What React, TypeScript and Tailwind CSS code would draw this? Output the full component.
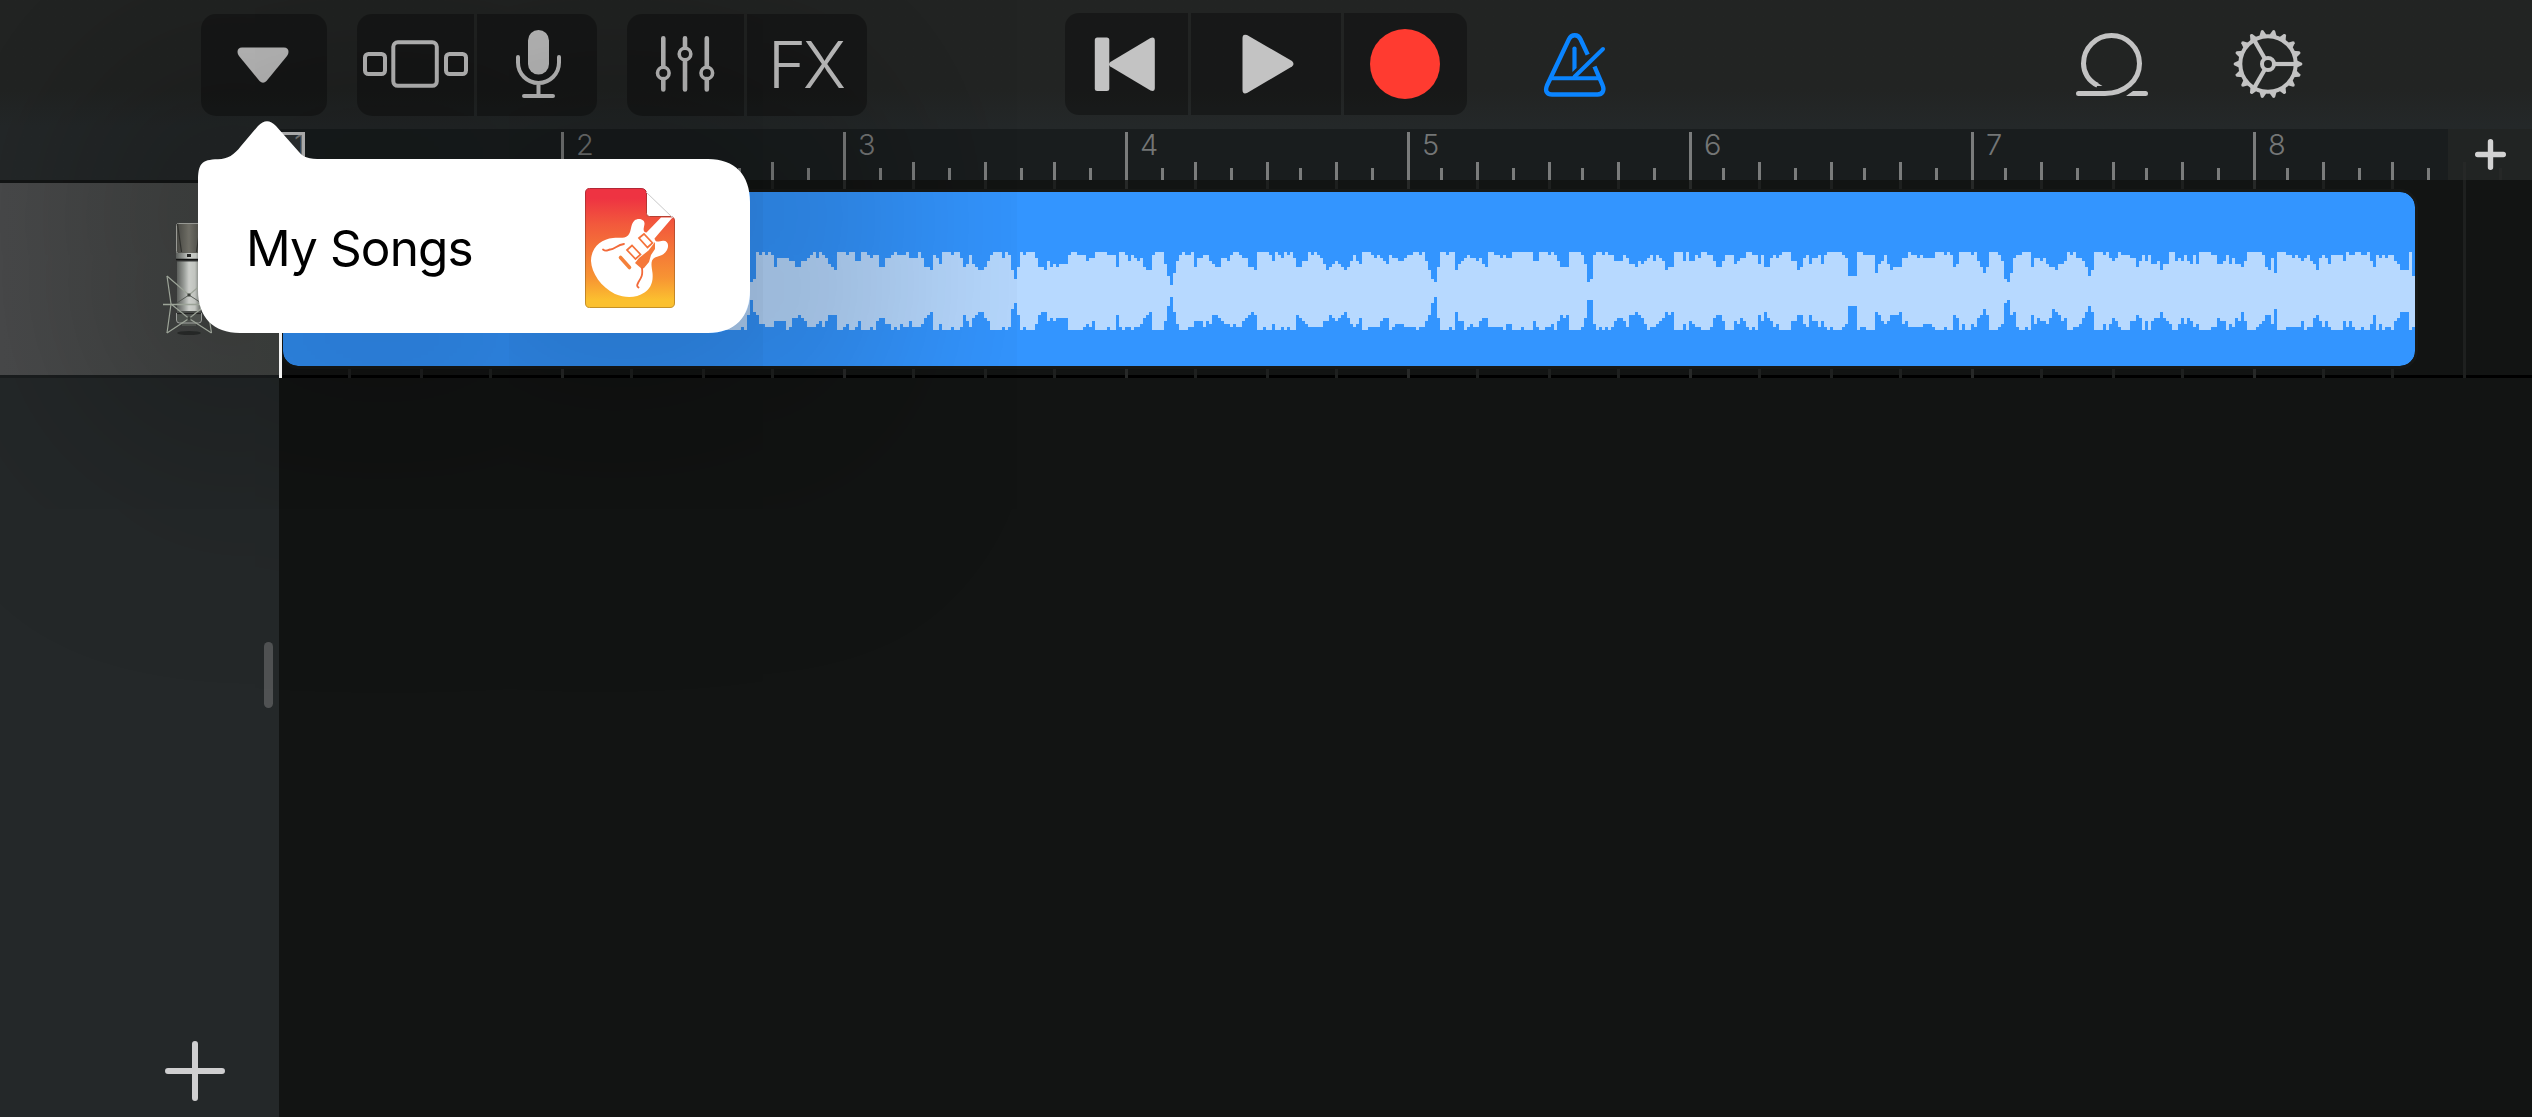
import React from "react";

/* ---------- timeline geometry ---------- */

const ticks = Array.from({ length: 64 }, (_, k) => ({
  k,
  x: Math.floor(k * 11.7415 + 0.485) * 3,
}));

/* Waveform envelope: offset / inset pairs, grouped by timeline segment. */
type Segment = { start: number; end: number; scale: number; top: string; bottom: string };

const segments: Segment[] = [
  {
    start: 740,
    end: 1340,
    scale: 2.6133,
    top: "0:3 26:10 34:9 42:0 49:1 57:0 65:1 73:0 81:1 89:5 97:2 128:3 144:5 159:3 175:2 183:1 191:0 199:2 206:0 214:1 222:2 230:4 238:5 246:6 253:0 277:1 285:0 301:3 316:0 332:1 340:2 348:1 363:5 379:2 395:1 403:0 410:1 434:0 442:2 465:0 473:2 481:5 497:6 504:1 512:2 520:4 528:0 552:1 560:0 575:2 583:5 591:4 599:1 607:4 614:5 622:6 638:5 646:3 654:1 662:0 685:2 693:0 701:1 709:6 717:9 724:5 732:0 740:1 748:0 771:2 779:5 795:6 803:3 811:5 819:4 827:5 835:4 858:1 866:0 882:1 905:3 913:2 929:0 960:1 984:5 991:0 1007:1 1015:3 1023:1 1031:2 1039:3 1046:2 1054:5 1062:6 1078:1 1086:0 1109:4 1117:8 1125:11 1133:7 1140:3 1148:1 1156:0 1164:1 1180:0 1188:5 1196:2 1211:1 1227:3 1235:4 1243:5 1258:2 1274:3 1282:1 1290:0 1305:1 1313:2 1329:5 1345:6 1352:0 1384:1 1392:3 1400:0 1408:1 1416:2 1423:0 1431:1 1439:0 1447:2 1455:5 1470:3 1486:0 1494:1 1502:0 1510:1 1518:2 1526:4 1533:6 1541:5 1549:4 1557:3 1565:4",
    bottom:
      "0:0 3:1 10:0 18:5 26:10 34:6 42:5 50:2 65:1 89:3 120:0 128:1 136:4 152:5 159:4 167:3 175:1 199:2 207:3 214:1 222:3 230:5 253:0 269:1 277:2 285:0 301:1 309:3 316:0 340:1 348:0 356:3 363:4 379:2 395:0 403:1 410:0 418:2 426:1 442:3 450:1 473:2 481:4 489:5 497:6 504:0 520:2 528:0 552:1 560:0 575:1 583:5 591:3 599:1 607:4 614:5 622:6 638:4 646:3 654:0 685:1 693:0 701:1 709:7 717:9 724:5 732:0 740:1 748:0 771:2 779:5 787:6 803:3 811:4 819:3 827:4 858:0 897:1 905:2 913:1 921:3 929:0 960:1 968:0 984:5 991:1 999:0 1007:1 1023:0 1031:1 1046:2 1054:4 1062:5 1070:6 1078:0 1109:3 1117:8 1125:11 1133:6 1141:2 1149:0 1172:1 1188:3 1211:1 1219:3 1227:2 1235:5 1250:4 1258:3 1266:2 1282:1 1290:2 1298:1 1313:3 1321:4 1329:5 1337:6 1345:5 1352:0 1368:1 1376:0 1392:2 1400:0 1416:1 1423:0 1431:1 1439:0 1455:5 1463:4 1470:3 1478:2 1486:1 1526:3 1541:5 1549:4 1557:3 1565:4",
  },
  {
    start: 1340,
    end: 1880,
    scale: 2.8,
    top: "0:4 3:5 11:6 20:5 28:3 37:1 45:3 53:4 62:0 87:1 95:2 104:1 112:2 120:3 129:4 137:1 146:2 162:3 179:2 188:1 204:0 221:1 229:0 238:3 246:6 255:9 263:10 272:5 280:0 297:1 305:0 322:6 330:4 338:3 347:2 356:1 364:2 381:3 389:2 398:4 406:5 414:0 431:1 448:2 457:1 465:2 482:0 541:3 557:0 582:1 591:0 599:1 608:3 616:5 641:0 675:1 683:4 692:10 700:9 708:1 717:0 734:1 742:0 750:1 767:3 792:1 801:2 809:4 826:5 834:3 843:4 851:3 860:2 868:1 876:3 885:1 893:2 902:3 910:6 918:5 935:0 960:3 969:0 977:3 994:1 1002:2 1011:0 1028:1 1044:3 1053:5 1070:3 1078:1 1103:4 1112:3 1120:2 1137:0 1154:1 1170:4 1179:1 1187:5 1204:2 1213:1 1221:2 1229:1 1238:0 1263:3 1280:6 1288:5 1296:2 1305:1 1313:4 1322:2 1339:1 1347:4 1355:1 1364:0 1406:1 1414:2 1422:8 1448:0 1464:1 1498:7 1506:4",
    bottom:
      "0:4 3:5 11:6 20:4 28:2 37:1 45:2 53:4 62:0 78:1 112:3 120:4 137:0 146:1 154:2 179:1 213:0 221:1 238:3 246:5 255:9 263:11 272:4 280:0 305:1 313:0 322:6 330:3 347:0 356:1 364:2 372:1 389:3 398:4 414:1 457:0 465:2 482:0 507:1 515:0 541:3 549:1 557:0 574:1 591:2 599:0 608:3 616:5 624:4 633:5 641:0 675:1 683:4 692:10 708:2 717:0 725:1 734:0 742:1 750:0 759:1 767:3 776:4 792:3 801:1 809:5 826:6 834:5 843:4 851:2 860:0 868:1 885:2 893:3 902:4 910:6 918:5 927:6 935:0 960:2 969:0 977:3 985:2 994:1 1011:0 1036:1 1044:4 1053:5 1070:3 1078:0 1103:3 1112:2 1120:4 1129:3 1137:1 1145:0 1154:1 1162:0 1170:5 1179:3 1187:6 1196:4 1204:3 1213:1 1221:2 1229:0 1263:3 1280:5 1296:2 1305:1 1313:5 1322:3 1339:1 1347:3 1355:1 1364:0 1372:1 1380:0 1406:1 1414:2 1422:8 1448:0 1456:1 1473:0 1498:6 1506:5",
  },
  {
    start: 1880,
    end: 2415,
    scale: 2.8,
    top: "0:4 3:3 11:1 20:4 28:6 37:5 62:2 78:0 87:1 104:2 112:1 120:2 154:0 179:1 188:0 196:1 204:5 213:4 221:0 255:1 263:0 272:3 280:5 288:7 297:5 305:0 330:1 339:3 347:9 356:10 364:7 372:2 381:1 398:0 423:5 431:2 448:3 457:2 465:4 473:5 490:6 498:4 515:3 524:0 532:1 540:0 549:2 566:3 574:5 582:8 591:6 599:0 624:1 633:0 641:2 650:3 658:2 666:0 675:1 700:2 717:5 725:3 734:1 742:3 750:1 759:4 776:3 784:6 792:4 809:0 826:3 834:2 843:3 851:1 860:3 868:4 876:1 885:4 893:0 927:1 944:4 960:3 969:1 977:4 986:2 994:4 1011:5 1019:3 1028:0 1070:1 1078:5 1087:6 1095:2 1103:7 1112:0 1137:1 1154:2 1162:1 1170:2 1179:3 1187:2 1196:1 1204:3 1213:4 1221:6 1229:2 1238:1 1246:2 1254:4 1263:1 1296:3 1305:0 1313:1 1330:0 1347:1 1364:0 1372:3 1380:5 1389:1 1397:2 1406:1 1414:2 1422:1 1439:3 1447:4 1456:6 1481:0 1490:8",
    bottom:
      "0:3 11:2 20:3 28:5 53:6 62:2 70:3 78:1 120:2 146:1 154:0 179:1 188:0 204:5 213:4 221:0 230:2 238:0 255:2 263:1 272:4 280:5 288:7 297:5 305:0 330:1 339:2 347:9 356:10 364:5 372:6 381:1 390:0 406:1 414:0 423:5 431:2 440:4 448:3 465:2 473:4 482:7 490:6 498:5 507:3 515:4 524:0 540:1 557:2 566:4 574:6 582:8 591:6 599:0 624:2 633:0 641:2 650:4 658:3 666:1 675:0 700:3 717:5 725:4 734:0 742:3 750:0 759:3 767:4 784:6 792:4 801:3 809:2 818:0 834:2 843:4 851:2 860:4 868:3 876:1 885:2 893:0 927:1 944:4 952:3 969:0 977:2 986:1 994:4 1003:3 1011:6 1019:3 1028:0 1053:1 1062:2 1070:3 1078:5 1095:2 1103:7 1112:0 1137:1 1179:3 1187:0 1196:1 1213:4 1221:5 1229:3 1238:1 1246:3 1254:1 1263:0 1296:3 1305:1 1313:3 1322:1 1330:0 1347:1 1355:0 1372:2 1380:5 1389:0 1397:2 1406:0 1414:1 1431:0 1439:3 1447:4 1456:6 1481:0 1490:1",
  },
];

const CLIP_X = 283;

function steps(kind: "top" | "bottom") {
  const out: [number, number][] = [[CLIP_X, 4], [720, 0]];
  for (const s of segments) {
    for (const pair of s[kind].split(" ")) {
      const [o, v] = pair.split(":").map(Number);
      out.push([Math.round((s.start + o / s.scale) / 3) * 3, v]);
    }
  }
  return out;
}

function wavePath() {
  const top = steps("top");
  const bottom = steps("bottom");
  const fx = (x: number) => x - CLIP_X;
  let d = `M0 ${top[0][1] * 3}`;
  top.forEach(([x, v]) => {
    d += `H${fx(x)}V${v * 3}`;
  });
  d += `H${2415 - CLIP_X}`;
  for (let i = bottom.length - 1; i >= 0; i--) {
    d += `V${78 - bottom[i][1] * 3}H${fx(bottom[i][0])}`;
  }
  return d + "Z";
}

/* ---------- icons ---------- */

const GRAY = "#c3c3c3";

function Carousel() {
  return (
    <svg width="117" height="102" fill="none" stroke={GRAY} strokeWidth="4">
      <rect x="8" y="40" width="20" height="20" rx="3.5" />
      <rect x="36.3" y="28.3" width="43.5" height="43.5" rx="4.5" />
      <rect x="89" y="40" width="20" height="20" rx="3.5" />
    </svg>
  );
}

function Mic() {
  return (
    <svg width="120" height="102" fill="none" stroke={GRAY} strokeWidth="4" strokeLinecap="round">
      <rect x="51" y="16" width="21" height="44.5" rx="10.5" fill={GRAY} stroke="none" />
      <path d="M41 43v5.500a20.500 20.500 0 0 0 41 0V43M61.500 70v11M47 82h29" />
    </svg>
  );
}

function Faders() {
  return (
    <svg width="117" height="102" fill="none" stroke={GRAY} strokeWidth="4.600" strokeLinecap="round">
      <path d="M36.300 24.300v28M36.300 65v10.500M58 24.300v9M58 46.300v29.200M79.800 24.300v28M79.800 65v10.500" />
      <circle cx="36.300" cy="59" r="5.800" strokeWidth="3.600" />
      <circle cx="58" cy="40" r="5.800" strokeWidth="3.600" />
      <circle cx="79.800" cy="59" r="5.800" strokeWidth="3.600" />
    </svg>
  );
}

function Metronome() {
  return (
    <svg width="64" height="66" fill="none" stroke="#0a84ff" strokeWidth="4.400">
      <path d="M44.700 22.600 37.500 7.200Q35.700 3.200 31.800 3.200Q27.800 3.200 26 7.200L4 53.500C1.500 59.500 4.500 62.500 9 62.500H54.500C59 62.500 62 59 59.500 53L51.500 34.500" />
      <path d="M7 46.200H57" strokeWidth="4" />
      <path d="M31.500 44.700 60 17" strokeLinecap="round" strokeWidth="4" />
      <path d="M29.400 16.500a2.100 2.100 0 0 1 4.200 0V36l-4.200 4z" fill="#0a84ff" stroke="none" />
    </svg>
  );
}

function LoopIcon() {
  return (
    <svg width="74" height="68" fill="none" stroke={GRAY} strokeWidth="5">
      <path d="M22.500 54.300C13.500 50 8.500 41.500 8.500 32.500a28 28 0 1 1 56 0C64.500 49 50 62.500 30 62.500H3.500" />
      <path d="M3.500 62.500H6M60 62.500h10.500" strokeLinecap="round" />
      <path d="M51 65 58 60H63V65z M20 50.500 27.500 55h-8z" fill={GRAY} stroke="none" />
    </svg>
  );
}

function Gear() {
  const teeth = Array.from({ length: 18 }, (_, i) => i * 20);
  return (
    <svg width="72" height="72" viewBox="-36 -36 72 72" fill="none" stroke={GRAY}>
      <circle r="27.700" strokeWidth="4" />
      {teeth.map((a) => (
        <path key={a} d="M28-4 33.800-1.300Q35.200 0 33.800 1.300L28 4z" fill={GRAY} stroke="none" transform={`rotate(${a})`} />
      ))}
      <circle r="6" strokeWidth="4" />
      {[0, 120, 240].map((a) => (
        <path key={a} d="M7 0H27" strokeWidth="4.200" transform={`rotate(${a})`} />
      ))}
    </svg>
  );
}

function StudioMic() {
  return (
    <svg width="60" height="120" fill="none">
      <defs>
        <linearGradient id="tube" x1="0" x2="1" y1="0" y2="0">
          <stop offset="0" stopColor="#6d716d" />
          <stop offset=".28" stopColor="#b3b7b2" />
          <stop offset=".5" stopColor="#f3f6f1" />
          <stop offset=".75" stopColor="#e6eae4" />
          <stop offset="1" stopColor="#777b76" />
        </linearGradient>
        <linearGradient id="grill" x1="0" x2="1" y1="0" y2="0">
          <stop offset="0" stopColor="#55554f" />
          <stop offset=".5" stopColor="#85847a" />
          <stop offset="1" stopColor="#55554f" />
        </linearGradient>
      </defs>
      <ellipse cx="27" cy="114" rx="12" ry="2" fill="#1d1f1e" opacity=".6" />
      <rect x="14.500" y="4.500" width="25" height="30" rx="2" fill="url(#grill)" stroke="#b4b6b0" />
      <path d="M15.500 5l4 28M38.500 5l-4 28" stroke="#3a3b37" strokeWidth="1.200" />
      <rect x="14" y="34" width="26" height="6" fill="url(#tube)" />
      <rect x="25" y="35" width="4" height="3" fill="#2d2e2b" />
      <path d="M14 40.500h26" stroke="#161716" strokeWidth="1.500" />
      <rect x="15" y="42.500" width="24" height="51" fill="url(#tube)" />
      <path d="M15 92h24v8.500q0 3-5 3.500v3H20v-3q-5-.5-5-3.500z" fill="#5b605b" />
      <path d="M14.500 94v7q0 3 3 3h19q3 0 3-3v-7" stroke="#d7dad5" strokeWidth=".8" />
      <path d="M15 94.500h24" stroke="#2b2d2b" strokeWidth="1.200" />
      <g stroke="#b9c2b4" strokeWidth="1.200">
        <path d="M5 57 9 85 5 114M49.500 57 45 85 49.500 114" />
        <path d="M5 57 27 76 49.500 57M9 85 27 99.500 45 85M5 114 27 99.500 49.500 114" />
        <path d="M27 76 14 84.500M27 76 40 84.500" stroke="#5e635c" strokeWidth=".9" />
        <path d="M1 85.500h53" strokeWidth="1.600" />
      </g>
      <path d="M25.500 74.500h3v3h-3zM25.500 98h3v3h-3z" fill="#4a4f49" />
    </svg>
  );
}

function SongFile() {
  return (
    <svg width="92" height="122" fill="none">
      <defs>
        <linearGradient id="file" x1="0" x2="0" y1="0" y2="1">
          <stop offset=".08" stopColor="#ee3342" />
          <stop offset=".3" stopColor="#f2593c" />
          <stop offset=".75" stopColor="#f79433" />
          <stop offset=".94" stopColor="#fbc02f" />
        </linearGradient>
        <linearGradient id="fileEdge" x1="0" x2="0" y1="0" y2="1">
          <stop offset="0" stopColor="#b22735" />
          <stop offset="1" stopColor="#c59226" />
        </linearGradient>
      </defs>
      <path
        d="M5.500 1.500H57Q62.500 1.500 62.500 7V26.500Q62.500 29.500 65.500 29.500H86Q90.500 29.500 90.500 34V116Q90.500 120.500 86 120.500H5.500Q1.500 120.500 1.500 116V6Q1.500 1.500 5.500 1.500z"
        fill="url(#file)"
        stroke="url(#fileEdge)"
      />
      <path d="M62 5 89 31" stroke="#c9c9c9" />
      {/* guitar body, horns and neck */}
      <path
        d="M77 30.500H88.500L70.500 51.500C71.500 56 74.500 54.500 79 53.800C83.500 53.500 85.500 58 83 63C80 68.500 75 69 71 70.500C66 73 67.500 79 68.500 86C69.500 96 66 102 60.500 105.500C52 111 42 111.500 31 107C17 100 7.500 86 7 74C7 60 17.500 52 29 51C36 50.200 40 52 44 48.500C48 44 46 38 50.500 33.500C54 30.500 61 32 60.500 37C60 41 58 44.500 62.500 45.500z"
        fill="#fff"
      />
      <path d="M71 55 64.500 63.500 55 71 51 76 58 82 60 81 65 75 67 68 71 62z" fill="#f5783a" />
      <g fill="#fff" stroke="#f5723a" strokeWidth="1.700">
        <path d="M55 51 60 47 68.500 56 63.500 60.500z" />
        <path d="M43 63 48 58.500 56.500 67.500 51.500 72z" />
      </g>
      <path d="M36.500 70.500 45.500 80.500" stroke="#f4803a" strokeWidth="3.600" strokeLinecap="round" />
      <path d="M19 62.500c3 2.500 4.500.5 7 0 4.500.5 7-5 14-5.500M58 81c1 8-1 10-3.500 14-1.500 3-2 4 0 5.500" stroke="#f26a3a" strokeWidth="1.800" strokeLinecap="round" />
    </svg>
  );
}

function Plus({ size, weight, color }: { size: number; weight: number; color: string }) {
  const h = size / 2;
  const e = weight / 2;
  return (
    <svg width={size} height={size} stroke={color} strokeWidth={weight} strokeLinecap="round">
      <path d={`M${h} ${e}V${size - e}M${e} ${h}H${size - e}`} />
    </svg>
  );
}

/* ---------- page ---------- */

const cell = "flex h-full items-center justify-center bg-black/[0.31]";

function Toolbar() {
  return (
    <header className="flex h-[129px] shrink-0 items-start pl-[201px] pt-[14px]">
      <button className="flex h-[102px] w-[126px] items-center justify-center rounded-[15px] bg-black/[0.31]">
        <svg width="52" height="38" fill={GRAY} className="-ml-[2px] -mt-[1px]">
          <path d="M5 1.500H47Q51.500 1.500 51.500 6Q51.500 8 50 10L29.500 35Q26 38.500 22.500 35L2 10Q.5 8 .5 6Q.5 1.500 5 1.500z" />
        </svg>
      </button>
      <div className="ml-[30px] flex h-[102px] w-[240px] gap-[3px] overflow-hidden rounded-[15px]">
        <button className={`${cell} w-[117px]`}><Carousel /></button>
        <button className={`${cell} w-[120px]`}><Mic /></button>
      </div>
      <div className="ml-[30px] flex h-[102px] w-[240px] gap-[3px] overflow-hidden rounded-[15px]">
        <button className={`${cell} w-[117px]`}><Faders /></button>
        <button className={`${cell} w-[120px] pr-[3px] font-['Inter',sans-serif] text-[65px] font-[340] leading-[80px] tracking-[-3px] text-[#c3c3c3]`}>
          FX
        </button>
      </div>
      <div className="-mt-px ml-[198px] flex h-[102px] w-[402px] gap-[3px] overflow-hidden rounded-[14px]">
        <button className={`${cell} w-[123px]`}>
          <svg width="62" height="56" fill={GRAY} className="-ml-[3px]">
            <rect x=".8" y="1.500" width="14.500" height="53.500" rx="2.500" />
            <path d="M15 28.200Q15 27 16.300 26L56.500 2Q60.800 .5 60.800 4.500V52Q60.800 56 56.500 54.500L16.300 30.500Q15 29.500 15 28.200z" />
          </svg>
        </button>
        <button className={`${cell} w-[150px]`}>
          <svg width="52" height="60" fill={GRAY} className="ml-[3px]">
            <path d="M.5 4Q.5-.5 5 1L50 27Q53 30 50 32.500L5 59Q.5 60.500 .5 56z" />
          </svg>
        </button>
        <button className={`${cell} w-[123px]`}>
          <span className="-ml-[2px] block h-[70px] w-[70px] rounded-full bg-[#ff3b30]" />
        </button>
      </div>
      <button className="ml-[76px] mt-[18px]"><Metronome /></button>
      <button className="ml-[468px] mt-[17px]"><LoopIcon /></button>
      <button className="ml-[83px] mt-[14px]"><Gear /></button>
    </header>
  );
}

function Ruler() {
  return (
    <div className="flex h-[51px] shrink-0">
      <div className="w-[279px] shrink-0" />
      <div className="relative w-[2169px] shrink-0 bg-[#191d1e]">
        {ticks.map(({ k, x }) => (
          <React.Fragment key={k}>
            <span
              className={`absolute bottom-0 w-[3px] bg-[#7a7c7c] ${k % 8 === 0 ? "h-[48px]" : k % 2 === 0 ? "h-[18px]" : "h-[12px]"}`}
              style={{ left: x }}
            />
            {k % 8 === 0 && (
              <span
                className="absolute -top-[2px] font-['Inter',sans-serif] text-[29px] font-[360] leading-[36px] text-[#747676]"
                style={{ left: x + 15 }}
              >
                {k / 8 + 1}
              </span>
            )}
          </React.Fragment>
        ))}
        <span className="absolute left-0 top-[3px] h-[48px] w-[26px] border-[3px] border-[#c9c9c9] bg-white/10" />
      </div>
      <button className="relative flex flex-1 items-center justify-center bg-[#222423]/95 pl-[1px]">
        <Plus size={31} weight={5.4} color="#d2d2d2" />
      </button>
    </div>
  );
}

function Popover() {
  return (
    <div className="absolute left-[198px] top-[120px] h-[213px] w-[552px]">
      <div className="absolute inset-x-0 bottom-0 top-[39px] rounded-[38px] shadow-[0_0_230px_130px_rgba(0,0,0,0.23)]" />
      <svg width="552" height="213" className="absolute inset-0" fill="#fff">
        <path d="M0 62C0 44 3 39.500 20 39.300C30 39 36 35 43 26L60 6C66-.5 72-.5 78 6L101 32C106 37.500 110 39 124 39H510C537 39 552 55 552 82V170C552 197 537 213 510 213H42C15 213 0 197 0 170z" />
      </svg>
      <div className="relative flex h-full items-center pl-[48px] pt-[42px]">
        <span className="w-[338px] font-['Inter',sans-serif] text-[49.5px] leading-[60px] tracking-[-0.9px] text-black">
          My Songs
        </span>
        <SongFile />
      </div>
    </div>
  );
}

export default function App() {
  return (
    <div className="relative flex h-[1117px] w-[2532px] flex-col overflow-hidden bg-[#242829]">
      <div className="flex flex-col bg-linear-to-b from-[#222423] via-[#222423] to-[#242829] to-70%">
        <Toolbar />
        <Ruler />
      </div>

      <div className="flex h-[198px] shrink-0">
        <div className="flex w-[279px] shrink-0 items-start border-b-[3px] border-t-[3px] border-b-[#1b1e1f] border-t-[#141616] bg-linear-to-r from-[#4a4b4c] to-[#434644] pl-[162px] pt-[36px]">
          <StudioMic />
        </div>
        <div className="relative flex flex-1 border-b-[3px] border-black bg-[#121413]">
          {ticks
            .filter(({ k }) => k % 2 === 0)
            .map(({ k, x }) => (
              <span
                key={k}
                className={`absolute -bottom-[3px] top-0 w-[3px] ${k % 8 === 0 ? "bg-[#272928]" : "bg-[#1e201f]"}`}
                style={{ left: x }}
              />
            ))}
          <div className="relative ml-[4px] mt-[12px] h-[174px] w-[2132px] overflow-hidden rounded-[15px] bg-[#3395ff] outline-[3px] outline-[#161817]">
            <svg width="2132" height="78" className="mt-[60px]" shapeRendering="crispEdges">
              <path d={wavePath()} fill="#b7d9ff" />
            </svg>
          </div>
          <span className="absolute -bottom-[3px] left-0 top-0 w-[3px] bg-white" />
        </div>
      </div>

      <div className="flex flex-1">
        <div className="flex w-[279px] shrink-0 flex-col justify-between">
          <span className="ml-[264px] mt-[264px] h-[66px] w-[9px] rounded-full bg-[#505253]" />
          <button className="mb-[16px] ml-[165px] w-[60px]">
            <Plus size={60} weight={6} color="#cfcfd0" />
          </button>
        </div>
        <main className="flex-1 bg-[#121413]" />
      </div>

      <Popover />
      {/* the playhead stays bright above the popover's shade */}
      <span className="absolute left-[279px] top-[333px] h-[45px] w-[3px] bg-[#f2f2f2]" />
    </div>
  );
}
